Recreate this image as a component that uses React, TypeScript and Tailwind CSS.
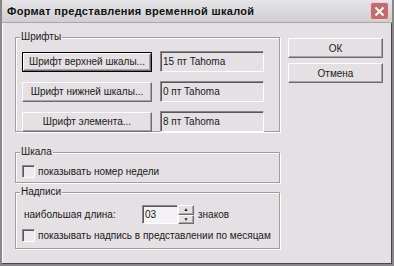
const raised =
  'bg-[#e4e0e4] border border-t-white border-l-white border-r-[#6e6a6e] border-b-[#6e6a6e] shadow-[inset_-1px_-1px_0_#a8a4a8]';
const sunken =
  'border border-t-[#8a868a] border-l-[#8a868a] border-r-white border-b-white shadow-[inset_1px_1px_0_#5a565a]';

function Btn({ label, focused, className }: { label: string; focused?: boolean; className: string }) {
  return (
    <div className={focused ? 'border border-black ' + className : className}>
      <div className={raised + ' h-full flex items-center justify-center whitespace-nowrap text-[10px] text-[#1a1a1a]'}>
        {label}
      </div>
    </div>
  );
}

function Field({ value }: { value: string }) {
  return (
    <div className={sunken + ' w-[104px] h-[21px] flex items-center pl-[2px] text-[10px] text-[#1a1a1a]'}>{value}</div>
  );
}

function Group({ title, className, children }: { title: string; className: string; children: React.ReactNode }) {
  return (
    <div className={'relative border border-[#a09ca0] shadow-[inset_1px_1px_0_#fff,1px_1px_0_#fff] ' + className}>
      <span className="absolute -top-[8px] left-[4px] px-[1px] bg-[#e4e0e4] text-[10px] leading-[14px] text-[#1a1a1a]">
        {title}
      </span>
      {children}
    </div>
  );
}

function Check({ label }: { label: string }) {
  return (
    <div className="flex items-center gap-[3px] whitespace-nowrap text-[10px] text-[#1a1a1a]">
      <div className={sunken + ' w-[13px] h-[13px] shrink-0 bg-[#eeebee]'} />
      <span>{label}</span>
    </div>
  );
}

export default function App() {
  return (
    <div className="w-[394px] h-[266px] bg-[#e4e0e4] font-['Liberation_Sans',sans-serif] border-2 border-t-0 border-[#8a868a] shadow-[inset_-1px_-1px_0_#4a464a,inset_1px_0_0_#fff] flex flex-col overflow-hidden">
      <div className="h-[23px] shrink-0 bg-gradient-to-b from-[#e6e6e8] to-[#cfcfd2] border-b border-[#a8a8ac] flex items-center justify-between pl-[5px] pr-[3px]">
        <span className="text-[11px] font-bold text-[#111] tracking-[0.3px]">Формат представления временной шкалой</span>
        <div className="w-[19px] h-[18px] rounded-[3px] bg-[#c66a6e] border border-[#f0d0d0] flex items-center justify-center">
          <svg width="11" height="11" viewBox="0 0 11 11">
            <path d="M1.5 1.5 L9.5 9.5 M9.5 1.5 L1.5 9.5" stroke="#fff" strokeWidth="2" />
          </svg>
        </div>
      </div>

      <div className="flex pl-[13px] pt-[14px]">
        <div className="w-[265px] flex flex-col">
          <Group title="Шрифты" className="h-[95px] pt-[13px] pl-[6px]">
            <div className="flex flex-col gap-[9px]">
              <div className="flex items-center gap-[8px]">
                <Btn label="Шрифт верхней шкалы..." focused className="w-[130px] h-[20px]" />
                <Field value="15 пт Tahoma" />
              </div>
              <div className="flex items-center gap-[8px]">
                <Btn label="Шрифт нижней шкалы..." className="w-[130px] h-[20px]" />
                <Field value="0 пт Tahoma" />
              </div>
              <div className="flex items-center gap-[8px]">
                <Btn label="Шрифт элемента..." className="w-[130px] h-[20px]" />
                <Field value="8 пт Tahoma" />
              </div>
            </div>
          </Group>

          <Group title="Шкала" className="mt-[20px] h-[31px] pt-[11px] pl-[6px]">
            <Check label="показывать номер недели" />
          </Group>

          <Group title="Надписи" className="mt-[9px] h-[57px] pt-[12px] pl-[6px]">
            <div className="flex items-center text-[10px] text-[#1a1a1a]">
              <span className="w-[120px] pl-[2px]">наибольшая длина:</span>
              <div className={sunken + ' w-[36px] h-[19px] flex items-center pl-[2px] bg-[#f4f2f4]'}>03</div>
              <div className="w-[16px] h-[19px] flex flex-col">
                <div className={raised + ' h-1/2 flex items-center justify-center text-[5px]'}>▲</div>
                <div className={raised + ' h-1/2 flex items-center justify-center text-[5px]'}>▼</div>
              </div>
              <span className="ml-[4px]">знаков</span>
            </div>
            <div className="mt-[4px]">
              <Check label="показывать надпись в представлении по месяцам" />
            </div>
          </Group>
        </div>

        <div className="ml-[8px] pt-[1px] flex flex-col gap-[5px]">
          <Btn label="ОК" className="w-[95px] h-[20px]" />
          <Btn label="Отмена" className="w-[95px] h-[20px]" />
        </div>
      </div>
    </div>
  );
}
